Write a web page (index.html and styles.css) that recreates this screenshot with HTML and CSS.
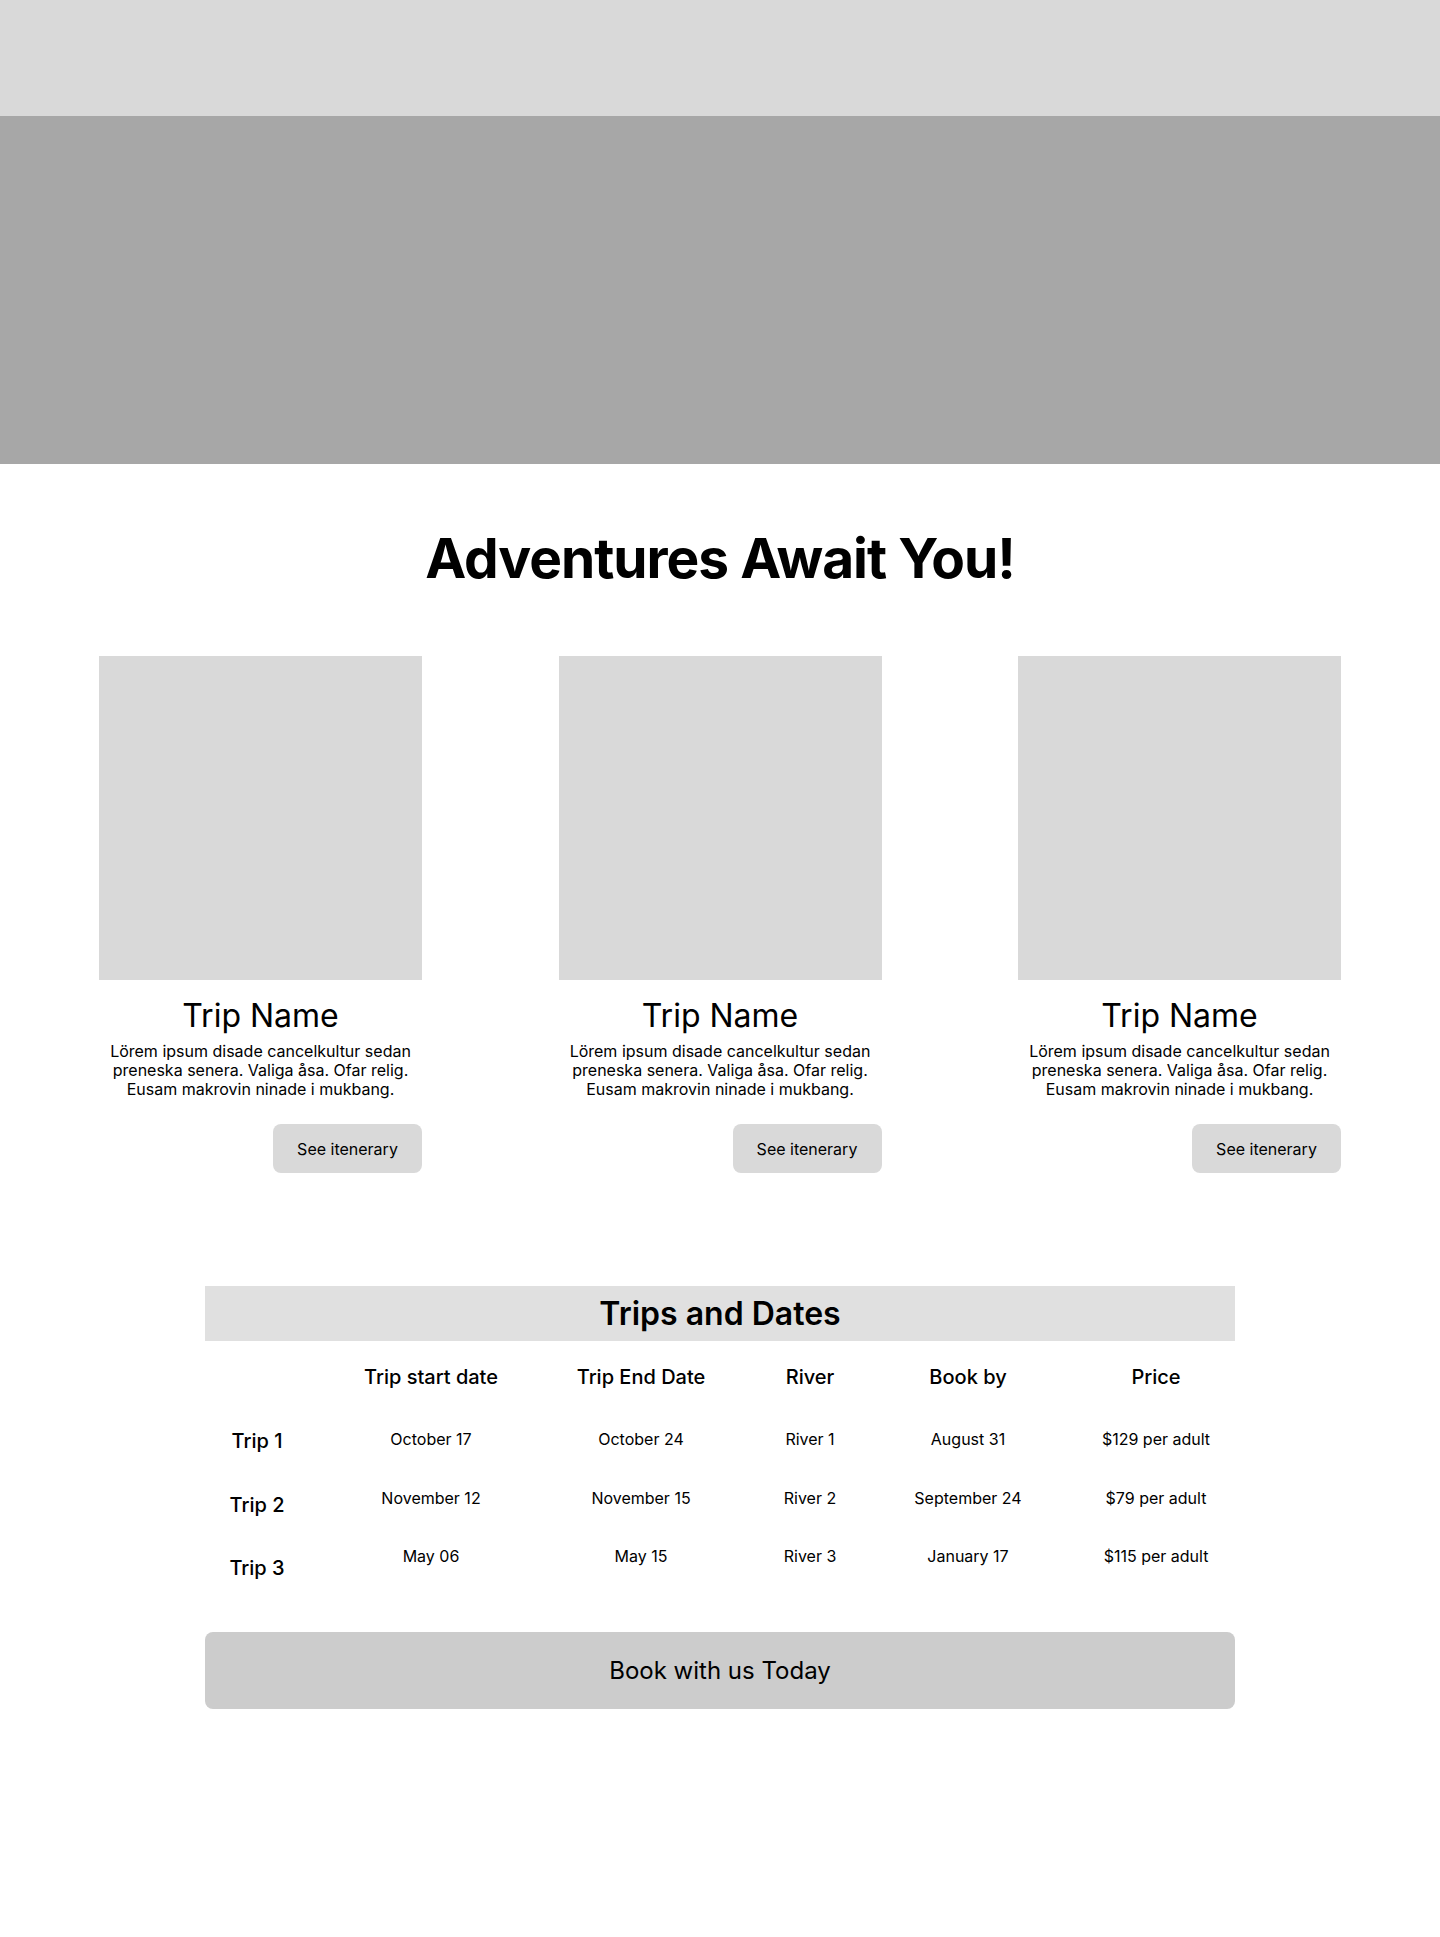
FILE: index.html
```html
<!DOCTYPE html>
<html lang="en">
<head>
<meta charset="utf-8">
<title>Adventures Await You!</title>
<link rel="stylesheet" href="styles.css">
</head>
<body>
<header class="topbar"></header>
<section class="hero"></section>
<main class="content">
  <h1 class="title">Adventures Await You!</h1>
  <div class="cards">
    <article class="card">
      <div class="card-img"></div>
      <h2 class="card-title">Trip Name</h2>
      <p class="card-text">Lörem ipsum disade cancelkultur sedan preneska senera. Valiga åsa. Ofar relig. Eusam makrovin ninade i mukbang.</p>
      <div class="card-actions"><button class="btn">See itenerary</button></div>
    </article>
    <article class="card">
      <div class="card-img"></div>
      <h2 class="card-title">Trip Name</h2>
      <p class="card-text">Lörem ipsum disade cancelkultur sedan preneska senera. Valiga åsa. Ofar relig. Eusam makrovin ninade i mukbang.</p>
      <div class="card-actions"><button class="btn">See itenerary</button></div>
    </article>
    <article class="card">
      <div class="card-img"></div>
      <h2 class="card-title">Trip Name</h2>
      <p class="card-text">Lörem ipsum disade cancelkultur sedan preneska senera. Valiga åsa. Ofar relig. Eusam makrovin ninade i mukbang.</p>
      <div class="card-actions"><button class="btn">See itenerary</button></div>
    </article>
  </div>

  <section class="trips">
    <h2 class="trips-title">Trips and Dates</h2>
    <div class="trips-grid">
      <div class="labels">
        <div class="label-head"></div>
        <div class="label">Trip 1</div>
        <div class="label">Trip 2</div>
        <div class="label">Trip 3</div>
      </div>
      <div class="data">
        <div class="row head">
          <div class="c c2">Trip start date</div>
          <div class="c c3">Trip End Date</div>
          <div class="c c4">River</div>
          <div class="c c5">Book by</div>
          <div class="c c6">Price</div>
        </div>
        <div class="row">
          <div class="c c2">October 17</div>
          <div class="c c3">October 24</div>
          <div class="c c4">River 1</div>
          <div class="c c5">August 31</div>
          <div class="c c6">$129 per adult</div>
        </div>
        <div class="row">
          <div class="c c2">November 12</div>
          <div class="c c3">November 15</div>
          <div class="c c4">River 2</div>
          <div class="c c5">September 24</div>
          <div class="c c6">$79 per adult</div>
        </div>
        <div class="row">
          <div class="c c2">May 06</div>
          <div class="c c3">May 15</div>
          <div class="c c4">River 3</div>
          <div class="c c5">January 17</div>
          <div class="c c6">$115 per adult</div>
        </div>
      </div>
    </div>
    <button class="book">Book with us Today</button>
  </section>
</main>
</body>
</html>
```

FILE: styles.css
```css
* { box-sizing: border-box; }
html, body { margin: 0; padding: 0; }
body {
  font-family: Inter, "Noto Sans", sans-serif;
  color: #000;
  background: #fff;
  min-height: 1937px;
}
.topbar { height: 116px; background: #d9d9d9; }
.hero { height: 348px; background: #a7a7a7; }

.content { padding-top: 59px; }
.title {
  margin: 0;
  text-align: center;
  font-weight: 700;
  font-size: 55px;
  letter-spacing: -1px;
  line-height: 70px;
}
.cards {
  display: flex;
  justify-content: space-between;
  padding: 0 99px;
  margin-top: 63px;
}
.card { width: 323px; display: flex; flex-direction: column; align-items: center; }
.card-img { width: 323px; height: 324px; background: #d9d9d9; }
.card-title {
  margin: 16px 0 0;
  font-weight: 400;
  font-size: 32px;
  line-height: 39px;
}
.card-text {
  margin: 7px 0 0;
  width: 323px;
  text-align: center;
  font-size: 16px;
  line-height: 19px;
  padding: 0 8px;
}
.card-actions { width: 100%; display: flex; justify-content: flex-end; margin-top: 25px; }
.btn {
  width: 149px; height: 49px;
  border: 0; border-radius: 8px;
  background: #d9d9d9;
  font-family: inherit; font-size: 16px; color: #000;
}

.trips { width: 1030px; margin: 113px auto 0; }
.trips-title {
  margin: 0;
  height: 55px;
  background: #e0e0e0;
  text-align: center;
  font-size: 32px;
  font-weight: 600;
  line-height: 55px;
}
.trips-grid { display: flex; padding-top: 15px; }
.labels { width: 104px; display: flex; flex-direction: column; }
.label-head { height: 53.5px; }
.label {
  height: 63.5px;
  display: flex; align-items: center; justify-content: center;
  font-size: 20px; font-weight: 500;
}
.data { flex: 1; display: flex; flex-direction: column; }
.row { display: grid; grid-template-columns: 244px 176px 162px 154px 190px; height: 58.5px; align-items: center; }
.row.head { height: 42px; margin-bottom: 12px; }
.row.head .c { font-size: 20px; font-weight: 500; }
.c { text-align: center; font-size: 16px; }
.c6 { padding-left: 32px; }

.book {
  display: block;
  width: 100%;
  height: 77px;
  margin-top: 32px;
  border: 0; border-radius: 8px;
  background: #cccccc;
  font-family: inherit;
  font-size: 24px;
  color: #000;
}
```
